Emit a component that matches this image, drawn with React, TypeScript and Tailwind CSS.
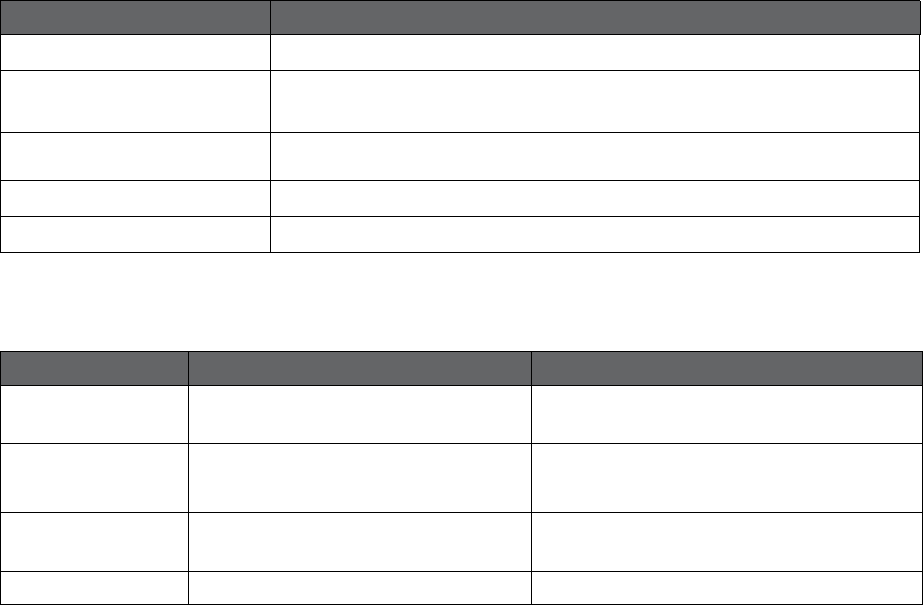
import React from "react";

const header = "bg-[#646567]";

export default function App() {
  const t1Rows = [36, 62, 48, 36, 36];
  const t2Rows = [58, 69, 59, 33];
  return (
    <div className="w-[923px] h-[605px] bg-white overflow-hidden" style={{ fontFamily: '"Liberation Sans", Arial, sans-serif' }}>
      <div className="w-[920px] border-l border-r border-t border-black">
        <div className={`flex h-[34px] mr-[-2px] border-b border-r border-black ${header}`}>
          <div className="w-[270px] border-r border-black" />
          <div className="flex-1" />
        </div>
        {t1Rows.map((h, i) => (
          <div key={i} className="flex border-b border-black" style={{ height: h }}>
            <div className="w-[270px] border-r border-black" />
            <div className="flex-1" />
          </div>
        ))}
      </div>
      <div className="mt-[98px] w-[923px] border-l border-r border-t border-black">
        <div className={`flex h-[34px] border-b border-black ${header}`}>
          <div className="w-[188px] border-r border-black" />
          <div className="w-[343px] border-r border-black" />
          <div className="flex-1" />
        </div>
        {t2Rows.map((h, i) => (
          <div key={i} className="flex border-b border-black" style={{ height: h }}>
            <div className="w-[188px] border-r border-black" />
            <div className="w-[343px] border-r border-black" />
            <div className="flex-1" />
          </div>
        ))}
      </div>
    </div>
  );
}
